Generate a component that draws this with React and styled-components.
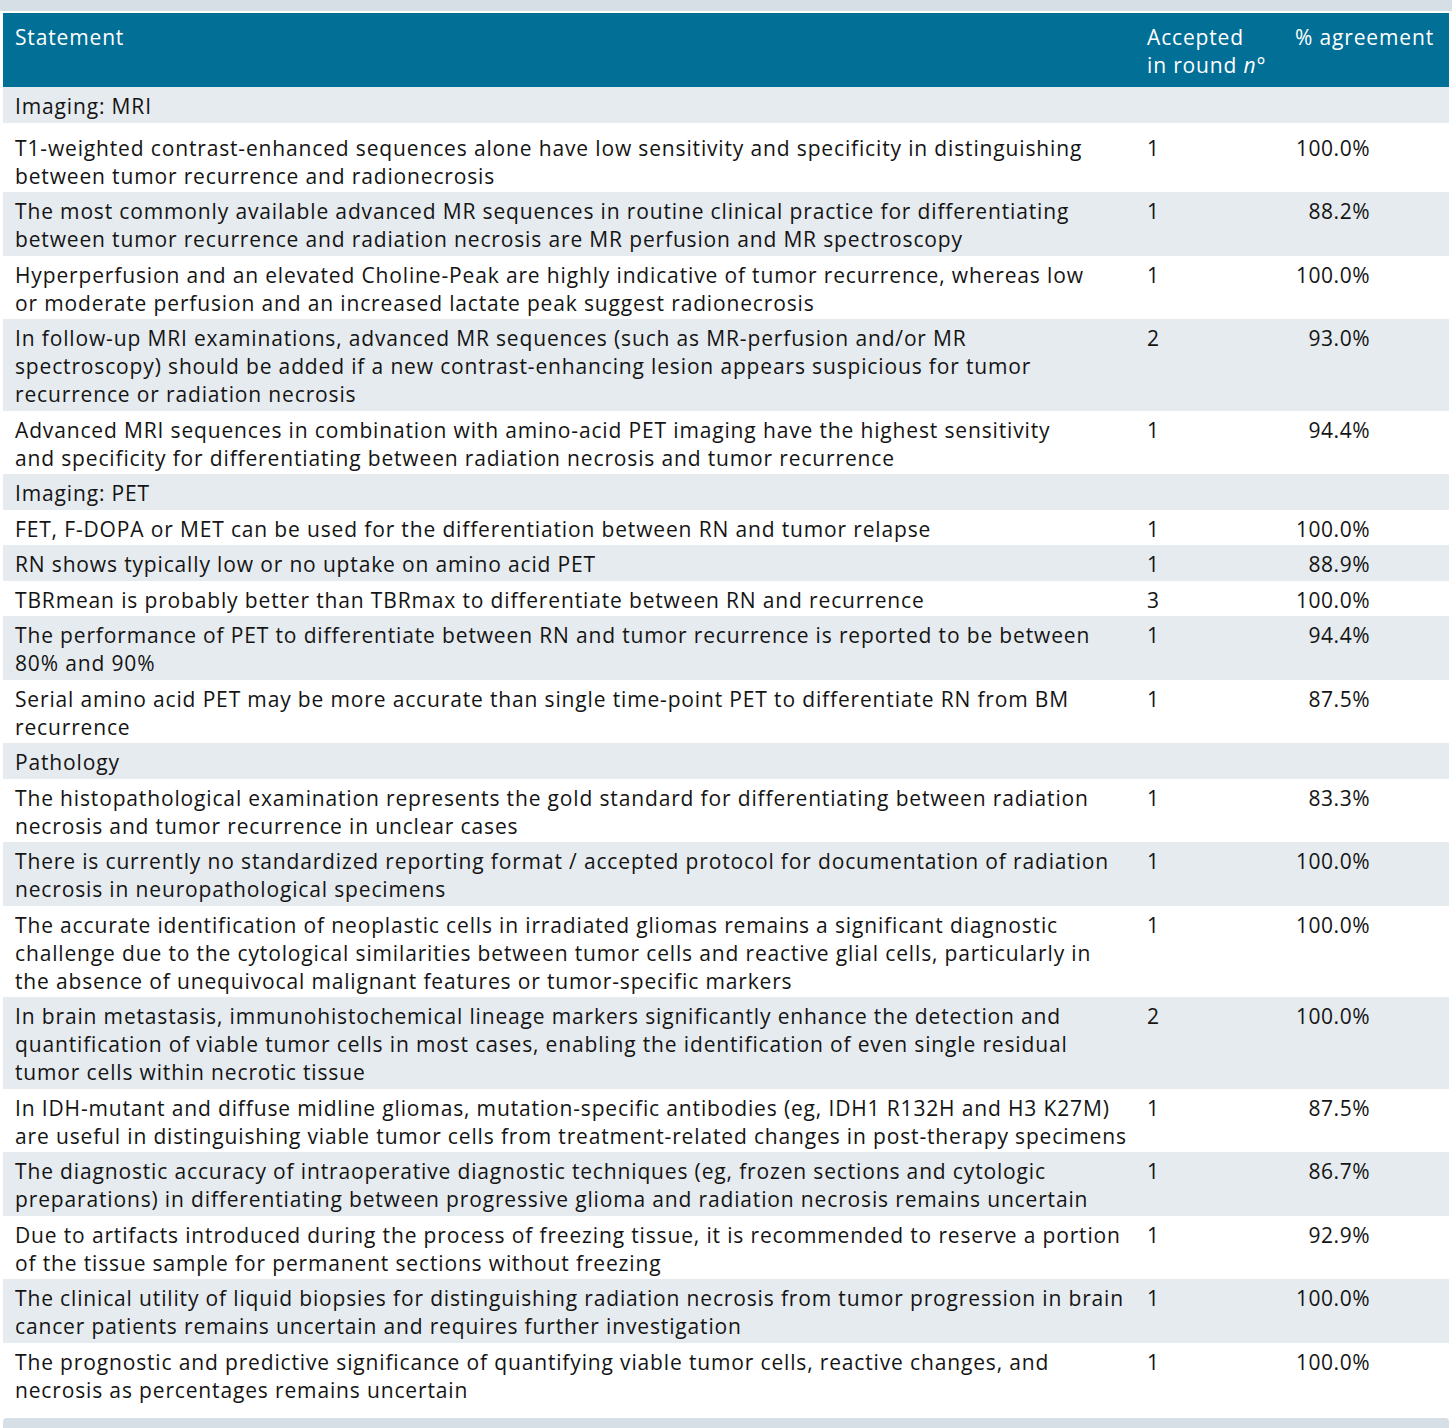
import React from 'react'
import styled, { createGlobalStyle } from 'styled-components'

const GlobalStyle = createGlobalStyle`
body {
  margin: 0;
  background: #ffffff;
  font-family: "Open Sans", "Liberation Sans", Arial, sans-serif;
}
`

const Page = styled.div`
width: 1452px;
display: flex;
flex-direction: column;
`

const TopStrip = styled.div`
height: 11px;
background: #d6dfe5;
margin-bottom: 2px;
`

const BottomStrip = styled.div`
height: 11px;
margin: 0 3px;
background: #d6dfe5;
border-radius: 4px 4px 0 0;
`

const Table = styled.table`
width: 1446px;
margin-left: 3px;
border-collapse: collapse;
table-layout: fixed;
font-size: 21px;
line-height: 28px;
letter-spacing: 0.85px;
color: #141414;
`

const HeadRow = styled.tr`
background: #026f97;
color: #ffffff;
`

const HeadCell = styled.th`
text-align: left;
font-weight: 400;
vertical-align: top;
padding: 10px 12px 8px 12px;
white-space: nowrap;
`

const Row = styled.tr`
background: ${(p) => (p.$shade ? '#e6ebef' : '#ffffff')};
`

const Cell = styled.td`
vertical-align: top;
padding: ${(p) => p.$top || 5}px 12px ${(p) => p.$bottom || 2.5}px 12px;
text-align: ${(p) => (p.$right ? 'right' : 'left')};
padding-right: ${(p) => (p.$right ? '79px' : '12px')};
letter-spacing: ${(p) => (p.$right ? '0.5px' : 'inherit')};
white-space: nowrap;
`

const Line = styled.span`
display: block;
white-space: nowrap;
`

const rows = [
  { section: 'Imaging: MRI' },
  {
    lines: [
      'T1-weighted contrast-enhanced sequences alone have low sensitivity and specificity in distinguishing',
      'between tumor recurrence and radionecrosis',
    ],
    round: 1, pct: '100.0%', top: 11,
  },
  {
    lines: [
      'The most commonly available advanced MR sequences in routine clinical practice for differentiating',
      'between tumor recurrence and radiation necrosis are MR perfusion and MR spectroscopy',
    ],
    round: 1, pct: '88.2%',
  },
  {
    lines: [
      'Hyperperfusion and an elevated Choline-Peak are highly indicative of tumor recurrence, whereas low',
      'or moderate perfusion and an increased lactate peak suggest radionecrosis',
    ],
    round: 1, pct: '100.0%',
  },
  {
    lines: [
      'In follow-up MRI examinations, advanced MR sequences (such as MR-perfusion and/or MR',
      'spectroscopy) should be added if a new contrast-enhancing lesion appears suspicious for tumor',
      'recurrence or radiation necrosis',
    ],
    round: 2, pct: '93.0%',
  },
  {
    lines: [
      'Advanced MRI sequences in combination with amino-acid PET imaging have the highest sensitivity',
      'and specificity for differentiating between radiation necrosis and tumor recurrence',
    ],
    round: 1, pct: '94.4%',
  },
  { section: 'Imaging: PET' },
  {
    lines: ['FET, F-DOPA or MET can be used for the differentiation between RN and tumor relapse'],
    round: 1, pct: '100.0%',
  },
  {
    lines: ['RN shows typically low or no uptake on amino acid PET'],
    round: 1, pct: '88.9%',
  },
  {
    lines: ['TBRmean is probably better than TBRmax to differentiate between RN and recurrence'],
    round: 3, pct: '100.0%',
  },
  {
    lines: [
      'The performance of PET to differentiate between RN and tumor recurrence is reported to be between',
      '80% and 90%',
    ],
    round: 1, pct: '94.4%',
  },
  {
    lines: [
      'Serial amino acid PET may be more accurate than single time-point PET to differentiate RN from BM',
      'recurrence',
    ],
    round: 1, pct: '87.5%',
  },
  { section: 'Pathology' },
  {
    lines: [
      'The histopathological examination represents the gold standard for differentiating between radiation',
      'necrosis and tumor recurrence in unclear cases',
    ],
    round: 1, pct: '83.3%',
  },
  {
    lines: [
      'There is currently no standardized reporting format / accepted protocol for documentation of radiation',
      'necrosis in neuropathological specimens',
    ],
    round: 1, pct: '100.0%',
  },
  {
    lines: [
      'The accurate identification of neoplastic cells in irradiated gliomas remains a significant diagnostic',
      'challenge due to the cytological similarities between tumor cells and reactive glial cells, particularly in',
      'the absence of unequivocal malignant features or tumor-specific markers',
    ],
    round: 1, pct: '100.0%',
  },
  {
    lines: [
      'In brain metastasis, immunohistochemical lineage markers significantly enhance the detection and',
      'quantification of viable tumor cells in most cases, enabling the identification of even single residual',
      'tumor cells within necrotic tissue',
    ],
    round: 2, pct: '100.0%',
  },
  {
    lines: [
      'In IDH-mutant and diffuse midline gliomas, mutation-specific antibodies (eg, IDH1 R132H and H3 K27M)',
      'are useful in distinguishing viable tumor cells from treatment-related changes in post-therapy specimens',
    ],
    round: 1, pct: '87.5%',
  },
  {
    lines: [
      'The diagnostic accuracy of intraoperative diagnostic techniques (eg, frozen sections and cytologic',
      'preparations) in differentiating between progressive glioma and radiation necrosis remains uncertain',
    ],
    round: 1, pct: '86.7%',
  },
  {
    lines: [
      'Due to artifacts introduced during the process of freezing tissue, it is recommended to reserve a portion',
      'of the tissue sample for permanent sections without freezing',
    ],
    round: 1, pct: '92.9%',
  },
  {
    lines: [
      'The clinical utility of liquid biopsies for distinguishing radiation necrosis from tumor progression in brain',
      'cancer patients remains uncertain and requires further investigation',
    ],
    round: 1, pct: '100.0%',
  },
  {
    lines: [
      'The prognostic and predictive significance of quantifying viable tumor cells, reactive changes, and',
      'necrosis as percentages remains uncertain',
    ],
    round: 1, pct: '100.0%', bottom: 14.5,
  },
]

const App = () => {
  return (
    <Page>
      <GlobalStyle />
      <TopStrip />
      <Table>
        <colgroup>
          <col style={{ width: '1132px' }} />
          <col style={{ width: '148px' }} />
          <col style={{ width: '166px' }} />
        </colgroup>
        <thead>
          <HeadRow>
            <HeadCell>Statement</HeadCell>
            <HeadCell>
              Accepted
              <br />
              in round <i>n</i>°
            </HeadCell>
            <HeadCell>% agreement</HeadCell>
          </HeadRow>
        </thead>
        <tbody>
          {rows.map((row, i) => (
            <Row key={i} $shade={i % 2 === 0}>
              {row.section ? (
                <>
                  <Cell>{row.section}</Cell>
                  <Cell />
                  <Cell />
                </>
              ) : (
                <>
                  <Cell $top={row.top} $bottom={row.bottom}>
                    {row.lines.map((l, j) => (
                      <Line key={j}>{l}</Line>
                    ))}
                  </Cell>
                  <Cell $top={row.top} $bottom={row.bottom}>{row.round}</Cell>
                  <Cell $top={row.top} $bottom={row.bottom} $right>{row.pct}</Cell>
                </>
              )}
            </Row>
          ))}
        </tbody>
      </Table>
      <BottomStrip />
    </Page>
  )
}

export default App
